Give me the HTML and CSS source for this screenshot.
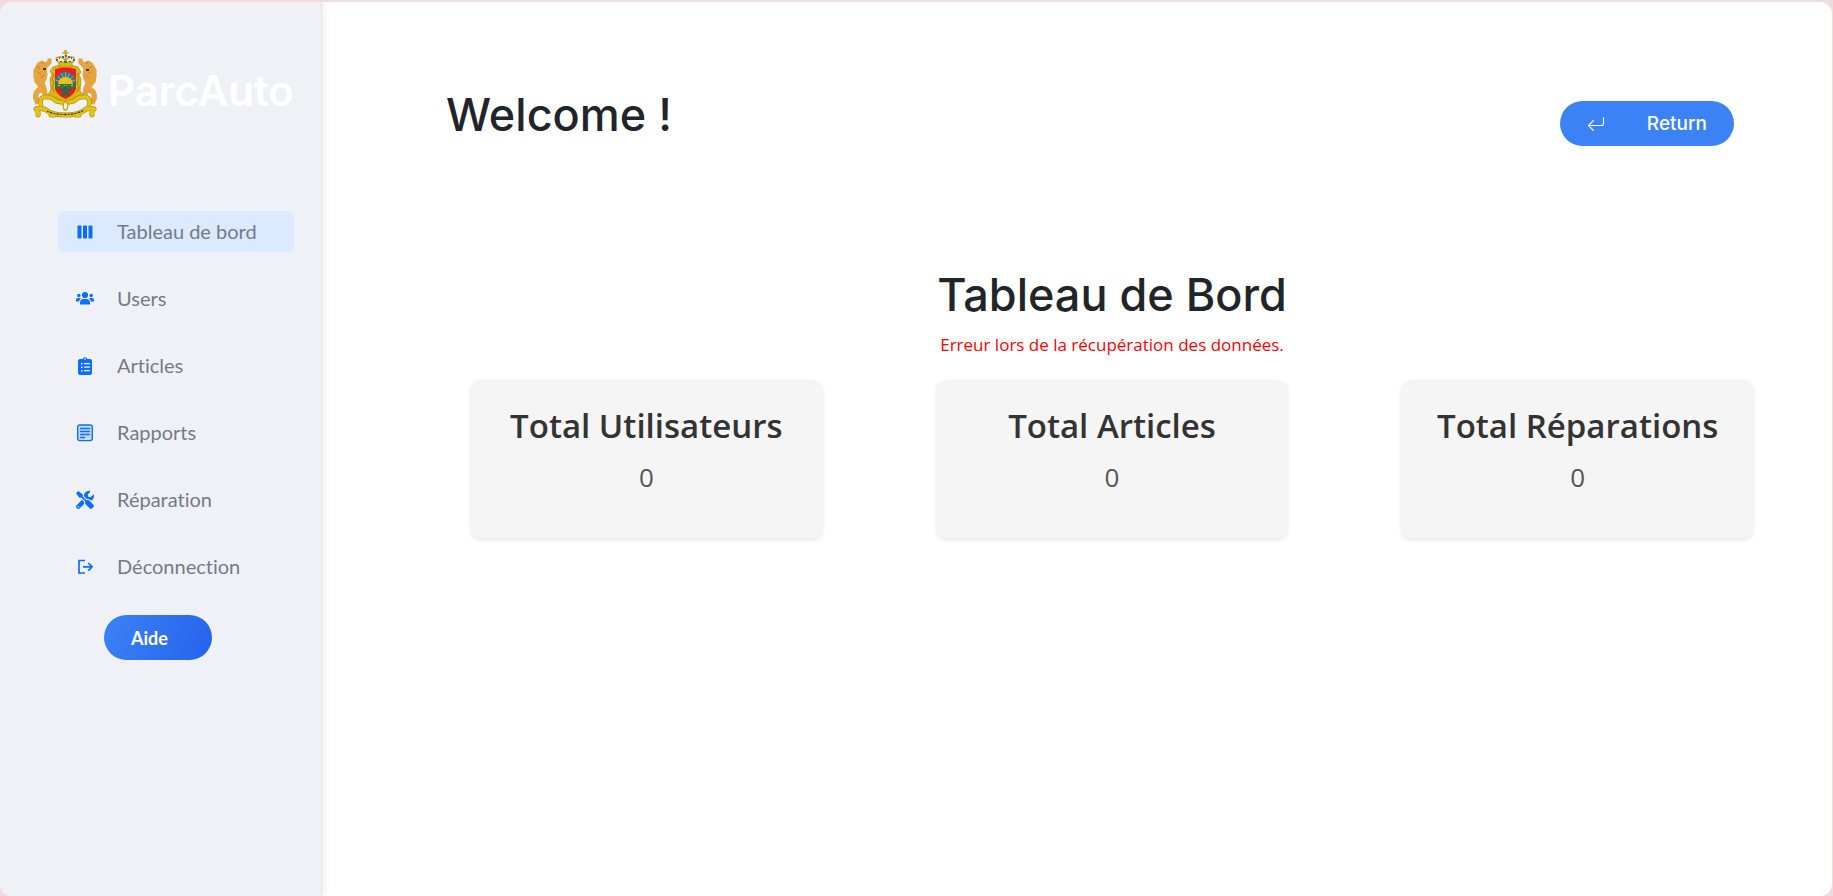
FILE: index.html
```html
<!DOCTYPE html>
<html lang="fr">
<head>
    <meta charset="UTF-8">
    <meta name="viewport" content="width=device-width, initial-scale=1">
    <title>ParcAuto</title>
    <link rel="stylesheet" href="styles.css">
</head>
<body>
<div class="app">

    <aside class="sidebar">
        <div class="brand">
            <svg class="brand-logo" viewBox="0 0 64 70" aria-hidden="true">
                <!-- lions -->
                <g fill="#e6a440" stroke="#e6a440" stroke-width="1.200" stroke-linejoin="round">
                    <path d="M5 14l4-2 4 2 2-2 0-2 3 0 0 4-4 4-1 2 1 5-1 5-2 4 2 5 1 7-3 2-2-6-4 3 0 4 2 5-4 1-3-7 2-6 4-4-4-5-1-6 0-6z"/>
                    <path d="M59 14l-4-2-4 2-2-2 0-2-3 0 0 4 4 4 1 2-1 5 1 5 2 4-2 5-1 7 3 2 2-6 4 3 0 4-2 5 4 1 3-7-2-6-4-4 4-5 1-6 0-6z"/>
                </g>
                <path fill="none" stroke="#a9712a" stroke-width=".7" d="M4 17l3 3M8 13l2 2M5 23l3 2M8 29l3-3M59 17l-3 3M55 13l-2 2M58 23l-3 2M56 29l-3-3"/>
                <path fill="#3f2d12" d="M10 19h3v2h-3zM53 20h3v2h-3z"/>
                <!-- gold frame -->
                <g fill="#dcb80e" stroke="#9c8214" stroke-width=".6">
                    <path d="M20 18q12-5 25 0l3 5-2 3 2 4-1 12 4 5-9 2-9.500 4-9.500-4-9-2 4-6-1-11 2-4-2-4z"/>
                    <path d="M26 13h13v5H26z"/>
                </g>
                <path fill="none" stroke="#8f7715" stroke-width=".8" d="M19 24l2 2-2 4 2 4-2 4 2 5M46 24l-2 2 2 4-2 4 2 4-2 5"/>
                <!-- shield -->
                <path fill="#ed1c24" d="M22 20q10-3 21 0v20q-2 6-10.500 10Q24 46 22 40z"/>
                <path fill="#2d7894" d="M22 34a10.500 11 0 0 1 21 0z"/>
                <path stroke="#d8c34b" stroke-width=".7" d="M32.500 34V23M32.500 34l-4-10M32.500 34l4-10M32.500 34l-8-7M32.500 34l8-7M32.500 34l-10-3M32.500 34l10-3"/>
                <path fill="#f0be16" d="M25 35a7.500 7 0 0 1 15 0z"/>
                <path fill="#16844b" d="M22 35h21v3l-3 1-3-1-4 1-4-1-3 1-4-1z"/>
                <path fill="#d8c34b" d="M25 36h2v1h-2zM31 36h3v1h-3zM38 36h2v1h-2z"/>
                <path fill="none" stroke="#167442" stroke-width="1.500" d="M32.500 37l3 9-8-5.500h10l-8 5.500z"/>
                <!-- crown -->
                <path fill="none" stroke="#c1a125" stroke-width="1.400" d="M26 14q-6-6 1-6 4 0 5.500 5Q34 8 38 8q6 0 1 6M32.500 13V2M29.500 4h6"/>
                <path fill="#178d54" d="M23 10h2v2h-2zM40 10h2v2h-2zM29 7h2v2h-2zM35 7h2v2h-2zM31 12h3v2h-3z"/>
                <path fill="#d8232a" d="M26 8h1v2h-1zM38 8h1v2h-1zM32 6h2v2h-2zM27 12h2v1h-2zM36 12h2v1h-2z"/>
                <circle cx="32.500" cy="2" r="1.300" fill="#c1a125"/>
                <!-- scroll under the shield and motto ribbon -->
                <g fill="none" stroke="#a88c13" stroke-linecap="round" stroke-linejoin="round">
                    <path stroke-width="4.600" d="M8 56q-2-6 3-8 7-1 12 4 9 3 18 0 5-5 12-4 5 2 3 8"/>
                    <path stroke-width="5" d="M3 60q4-1 8 0M3 60q3 3 2 6M61 60q-4-1-8 0M61 60q-3 3-2 6M13 61q7 5 19.500 5T52 61M18 66h3M43 66h3"/>
                </g>
                <g fill="none" stroke="#e6c313" stroke-linecap="round" stroke-linejoin="round">
                    <path stroke-width="3.400" d="M8 56q-2-6 3-8 7-1 12 4 9 3 18 0 5-5 12-4 5 2 3 8"/>
                    <path stroke-width="3.800" d="M3 60q4-1 8 0M3 60q3 3 2 6M61 60q-4-1-8 0M61 60q-3 3-2 6M13 61q7 5 19.500 5T52 61M18 66h3M43 66h3"/>
                </g>
                <ellipse cx="32.500" cy="57" rx="2.200" ry="4" fill="#f0f1f7" stroke="#c7a510" stroke-width="1.400"/>
                <path fill="none" stroke="#4d410c" stroke-width="1.300" stroke-dasharray="2 1 3 1" d="M14 62q7 3.500 18.500 3.500T51 61"/>
            </svg>
            <span class="brand-name">ParcAuto</span>
        </div>

        <nav class="menu">
            <a href="#" class="menu-item active">
                <svg class="icon" viewBox="0 0 18 18" fill="currentColor"><rect x="1.500" y="2.500" width="4" height="13" rx=".8"/><rect x="7" y="2.500" width="4" height="13" rx=".8"/><rect x="12.500" y="2.500" width="4" height="13" rx=".8"/></svg>
                <span>Tableau de bord</span>
            </a>
            <a href="#" class="menu-item">
                <svg class="icon" viewBox="0 0 18 18" fill="currentColor"><circle cx="9" cy="5" r="3.100"/><circle cx="2.800" cy="5.500" r="1.700"/><circle cx="15.200" cy="5.500" r="1.700"/><path d="M4 14.500v-1.700Q4 9 7.500 9h3q3.500 0 3.500 3.800v1.200q0 .5-.5.500h-9q-.5 0-.5-.5zM0 11V9.800Q0 8 2 8h1.800q.7 0 1.200.5Q3.300 9.500 3 11.500H.5Q0 11.500 0 11zM18 11V9.800Q18 8 16 8h-1.800q-.7 0-1.200.5 1.700 1 2 3h2.500q.5 0 .5-.5z"/></svg>
                <span>Users</span>
            </a>
            <a href="#" class="menu-item">
                <svg class="icon" viewBox="0 0 18 18" fill="currentColor"><path fill-rule="evenodd" d="M4 2h2.600a2.500 2.500 0 0 1 4.800 0H14q2 0 2 2v12q0 2-2 2H4q-2 0-2-2V4q0-2 2-2zM9 1.300a.8.800 0 1 0 0 1.600.8.800 0 0 0 0-1.600zM5 6v1.500h1.500V6zm3 0v1.200h6V6zM5 9.500V11h1.500V9.500zm3 0v1.200h6V9.500zM5 13v1.500h1.500V13zm3 0v1.200h6V13z"/></svg>
                <span>Articles</span>
            </a>
            <a href="#" class="menu-item">
                <svg class="icon" viewBox="0 0 18 18" fill="none" stroke="currentColor"><rect x="1.700" y="1" width="14.600" height="15.600" rx="2" fill="#c5dafb" stroke-width="1.400"/><path stroke-width="1.300" stroke-linecap="round" d="M4.500 4.500h9M4.500 7.500h9M4.500 10.500h9M4.500 13.500h4"/></svg>
                <span>Rapports</span>
            </a>
            <a href="#" class="menu-item">
                <svg class="icon" viewBox="0 0 512 512" fill="currentColor"><path d="M501.100 395.700L384 278.600c-23.100-23.100-57.600-27.600-85.400-13.900L192 158.100V96L64 0 0 64l96 128h62.100l106.600 106.600c-13.600 27.800-9.200 62.300 13.900 85.400l117.100 117.100c14.600 14.600 38.200 14.600 52.700 0l52.700-52.700c14.500-14.600 14.500-38.200 0-52.700zM331.700 225c28.300 0 54.900 11 74.900 31l19.400 19.400c15.800-6.900 30.800-16.500 43.800-29.500 37.100-37.100 49.700-89.300 37.900-136.700-2.200-9-13.500-12.100-20.100-5.500l-74.400 74.400-67.900-11.300L334 98.900l74.400-74.400c6.600-6.600 3.400-17.900-5.700-20.200-47.400-11.700-99.600.9-136.600 37.900-28.500 28.500-41.900 66.100-41.200 103.600l82.100 82.100c8.100-1.900 16.500-2.900 24.700-2.900zm-103.900 82l-56.700-56.700L18.700 402.800c-25 25-25 65.500 0 90.500s65.500 25 90.500 0l123.600-123.600c-7.600-19.900-9.900-41.600-5-62.700zM64 472c-13.200 0-24-10.800-24-24 0-13.300 10.700-24 24-24s24 10.700 24 24c0 13.200-10.700 24-24 24z"/></svg>
                <span>Réparation</span>
            </a>
            <a href="#" class="menu-item">
                <svg class="icon" viewBox="0 0 18 18" fill="none" stroke="currentColor" stroke-width="1.700"><path d="M9 2.500H3v12.500h6M7 8.800h9M12.300 5l3.800 3.800-3.800 3.800"/></svg>
                <span>Déconnection</span>
            </a>
        </nav>

        <button type="button" class="btn btn-help">Aide</button>
    </aside>

    <main class="content">
        <header class="topbar">
            <h1 class="title">Welcome !</h1>
            <button type="button" class="btn btn-return">
                <svg class="icon" viewBox="0 0 18 18" fill="none" stroke="currentColor" stroke-width="1.100" stroke-linecap="round" stroke-linejoin="round"><path d="M16.500 2.500v6q0 2-2 2h-13M6.500 5.500l-5 5 5 5"/></svg>
                <span>Return</span>
            </button>
        </header>

        <section class="dashboard">
            <h1 class="title">Tableau de Bord</h1>
            <p class="error">Erreur lors de la récupération des données.</p>

            <div class="cards">
                <div class="card">
                    <h2>Total Utilisateurs</h2>
                    <p>0</p>
                </div>
                <div class="card">
                    <h2>Total Articles</h2>
                    <p>0</p>
                </div>
                <div class="card">
                    <h2>Total Réparations</h2>
                    <p>0</p>
                </div>
            </div>
        </section>
    </main>

</div>
</body>
</html>
```
FILE: styles.css
```css
* {
    box-sizing: border-box;
}

body {
    margin: 0;
    padding: 2px 1px 0 0;
    background: #f0dcdc;
    font-family: "Open Sans", "Noto Sans", sans-serif;
    color: #212529;
}

h1, h2, p {
    margin: 0;
}

.app {
    display: flex;
    min-height: calc(100vh - 2px);
    background: #fff;
    border-radius: 12px;
    overflow: hidden;
}

/* sidebar */
.sidebar {
    flex: 0 0 322px;
    padding: 47px 27px 40px 33px;
    background: #f0f1f7;
    border-right: 1px solid #e4e4ea;
    box-shadow: 2px 0 8px rgba(0, 0, 0, 0.08);
    font-family: Lato, sans-serif;
    font-variant-ligatures: none;
}

.brand {
    display: flex;
    align-items: center;
    gap: 11px;
}

.brand-logo {
    flex: none;
    width: 64px;
    height: 70px;
}

.brand-name {
    padding-top: 14px;
    font-family: Inter, sans-serif;
    font-size: 42px;
    font-weight: 600;
    line-height: 56px;
    color: #fff;
}

.menu {
    display: flex;
    flex-direction: column;
    gap: 26px;
    margin: 92px 0 0 25px;
}

.menu-item {
    display: flex;
    align-items: center;
    gap: 23px;
    height: 41px;
    padding: 0 18px;
    border-radius: 6px;
    font-size: 20px;
    color: #737b88;
    text-decoration: none;
}

.menu-item span {
    padding-bottom: 2px;
}

.menu-item.active {
    background: #dbeafe;
}

.menu .icon {
    color: #0d6efd;
}

.icon {
    flex: none;
    width: 18px;
    height: 18px;
}

.btn {
    display: flex;
    align-items: center;
    height: 45px;
    padding: 0 27px;
    border: 0;
    border-radius: 23px;
    color: #fff;
    cursor: pointer;
}

.btn-help {
    width: 108px;
    margin: 28px 0 0 71px;
    background: linear-gradient(110deg, #3b82f6, #2563eb);
    font-family: Lato, sans-serif;
    font-size: 18px;
    font-weight: 700;
}

.btn-return {
    justify-content: space-between;
    width: 174px;
    background: #3b82f6;
    font-family: Inter, sans-serif;
    font-size: 19px;
    font-weight: 500;
}

/* main area */
.content {
    flex: 1;
    min-width: 0;
    padding: 86px 79px 40px 124px;
}

.topbar {
    display: flex;
    align-items: flex-start;
    justify-content: space-between;
    padding-right: 19px;
}

.title {
    font-family: Inter, sans-serif;
    font-size: 45px;
    font-weight: 500;
    line-height: 54px;
}

.topbar .btn {
    margin-top: 13px;
}

.dashboard {
    padding: 122px 0 0 25px;
    text-align: center;
}

.error {
    margin-top: 9px;
    font-size: 17px;
    line-height: 27px;
    color: #f00;
}

.cards {
    display: grid;
    grid-template-columns: repeat(3, 1fr);
    gap: 115px;
    margin-top: 22px;
}

.card {
    padding: 23px 16px 42px;
    background: #f5f5f5;
    border-radius: 9px;
    box-shadow: 0 2px 5px rgba(0, 0, 0, 0.1);
}

.card h2 {
    font-size: 33px;
    font-weight: 600;
    line-height: 46px;
    color: #333;
    white-space: nowrap;
}

.card p {
    margin-top: 9px;
    font-size: 26px;
    line-height: 38px;
    color: #555;
}
```
